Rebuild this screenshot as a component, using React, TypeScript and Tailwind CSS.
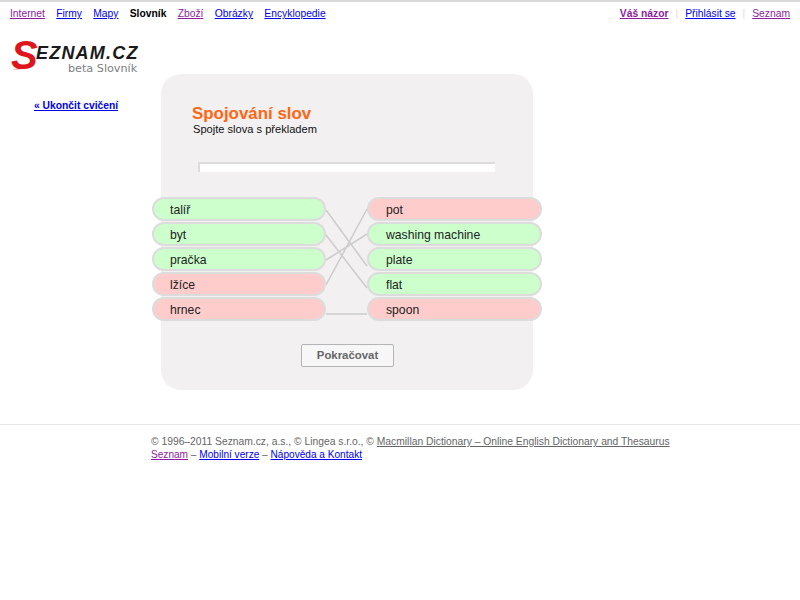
const blue = 'text-[#0000ee] underline';
const purple = 'text-[#8e1a9e] underline';

const leftWords = [
  { text: 'talíř', ok: true },
  { text: 'byt', ok: true },
  { text: 'pračka', ok: true },
  { text: 'lžíce', ok: false },
  { text: 'hrnec', ok: false },
];

const rightWords = [
  { text: 'pot', ok: false },
  { text: 'washing machine', ok: true },
  { text: 'plate', ok: true },
  { text: 'flat', ok: true },
  { text: 'spoon', ok: false },
];

function Pill({ text, ok, right }: { text: string; ok: boolean; right?: boolean }) {
  return (
    <div
      className={`h-[24px] rounded-[12px] border-2 border-[#dcdcdc] pt-[1px] text-[12.2px] leading-[20px] text-[#222] ${
        right ? 'w-[175px] pl-[17px]' : 'w-[174px] pl-[16px]'
      } ${ok ? 'bg-[#ccffcc]' : 'bg-[#ffcccc]'}`}
    >
      {text}
    </div>
  );
}

function Logo() {
  return (
    <div className="relative h-[40px] w-[130px] select-none">
      <span className="absolute left-[0px] top-[-10px] text-[40px] font-bold italic leading-[48px] text-[#e0141c]">
        S
      </span>
      <span className="absolute left-[25px] top-[3px] text-[18px] font-bold italic leading-[18px] tracking-[1.2px] text-[#1a1a1a]">
        EZNAM.CZ
      </span>
      <span className="absolute left-[57px] top-[21px] font-['DejaVu_Sans',sans-serif] text-[11.2px] leading-[13px] text-[#808080]">
        beta Slovník
      </span>
      {/* tail of the S swoosh */}
      <svg className="absolute left-[1px] top-[19px]" width="24" height="10" viewBox="0 0 24 10" fill="#e0141c">
        <path d="M0 9 C8 9 16 7 23 1 L21 5 C16 9 8 10 0 9 Z" />
      </svg>
    </div>
  );
}

export default function App() {
  return (
    <div className="min-h-[600px] w-[800px] overflow-hidden bg-white font-['Liberation_Sans',Arial,sans-serif] text-[10.3px]">
      {/* Top nav */}
      <div className="flex h-[41px] justify-between border-t-2 border-[#d9d9d9] px-[10px] pt-[5px] leading-[14px]">
        <div className="flex gap-[11.3px]">
          <a className={purple}>Internet</a>
          <a className={blue}>Firmy</a>
          <a className={blue}>Mapy</a>
          <b className="text-black">Slovník</b>
          <a className={purple}>Zboží</a>
          <a className={blue}>Obrázky</a>
          <a className={blue}>Encyklopedie</a>
        </div>
        <div className="flex gap-[7px]">
          <a className={`${purple} font-bold`}>Váš názor</a>
          <span className="text-[#ddd]">|</span>
          <a className={blue}>Přihlásit se</a>
          <span className="text-[#ddd]">|</span>
          <a className={purple}>Seznam</a>
        </div>
      </div>

      <div className="flex">
        {/* Sidebar */}
        <div className="w-[161px] shrink-0 pl-[11px]">
          <Logo />
          <a className="mt-[18px] block pl-[23px] font-bold leading-[14px] text-[#0000ee] underline">
            « Ukončit cvičení
          </a>
        </div>

        {/* Exercise card */}
        <div className="mt-[33px] h-[316px] w-[372px] rounded-[20px] bg-[#f2f0f1] pt-[30px]">
          <h1 className="pl-[31px] text-[16.9px] font-bold leading-[19px] text-[#ff6611]">
            Spojování slov
          </h1>
          <p className="pl-[32px] text-[11.1px] leading-[13px] text-[#111]">Spojte slova s překladem</p>

          <div className="ml-[37px] mt-[26px] h-[10px] w-[297px] border-l-2 border-t-2 border-[#dcdcdc] bg-white" />

          <div className="relative -mx-[9px] mt-[25px] flex w-[390px] justify-between">
            <div className="flex flex-col gap-[1px]">
              {leftWords.map((w) => (
                <Pill key={w.text} {...w} />
              ))}
            </div>
            <div className="flex flex-col gap-[1px]">
              {rightWords.map((w) => (
                <Pill key={w.text} {...w} right />
              ))}
            </div>
            {/* connecting lines */}
            <svg
              className="absolute left-[174px] top-0"
              width="42"
              height="124"
              viewBox="0 0 42 124"
              fill="none"
              stroke="#cccccc"
              strokeWidth="1.5"
            >
              <line x1="0" y1="13" x2="41" y2="69" />
              <line x1="0" y1="38" x2="41" y2="91" />
              <line x1="0" y1="63" x2="41" y2="37" />
              <line x1="0" y1="88" x2="41" y2="12" />
              <line x1="0" y1="117" x2="41" y2="117" />
            </svg>
          </div>

          <div className="mt-[23px] flex justify-center">
            <button className="h-[23px] w-[93px] rounded-[2px] border border-[#b5b5b5] bg-[#f7f7f7] pl-[1px] text-[11.4px] font-bold text-[#666]">
              Pokračovat
            </button>
          </div>
        </div>
      </div>

      {/* Footer */}
      <div className="mt-[34px] border-t border-[#e8e8e8] pl-[151px] pt-[10px] text-[10.3px] leading-[13px] text-[#666]">
        <p>
          © 1996–2011 Seznam.cz, a.s., © Lingea s.r.o., ©{' '}
          <a className="underline">Macmillan Dictionary – Online English Dictionary and Thesaurus</a>
        </p>
        <p className="text-[10.1px]">
          <a className={purple}>Seznam</a> – <a className={blue}>Mobilní verze</a> –{' '}
          <a className={blue}>Nápověda a Kontakt</a>
        </p>
      </div>
    </div>
  );
}
